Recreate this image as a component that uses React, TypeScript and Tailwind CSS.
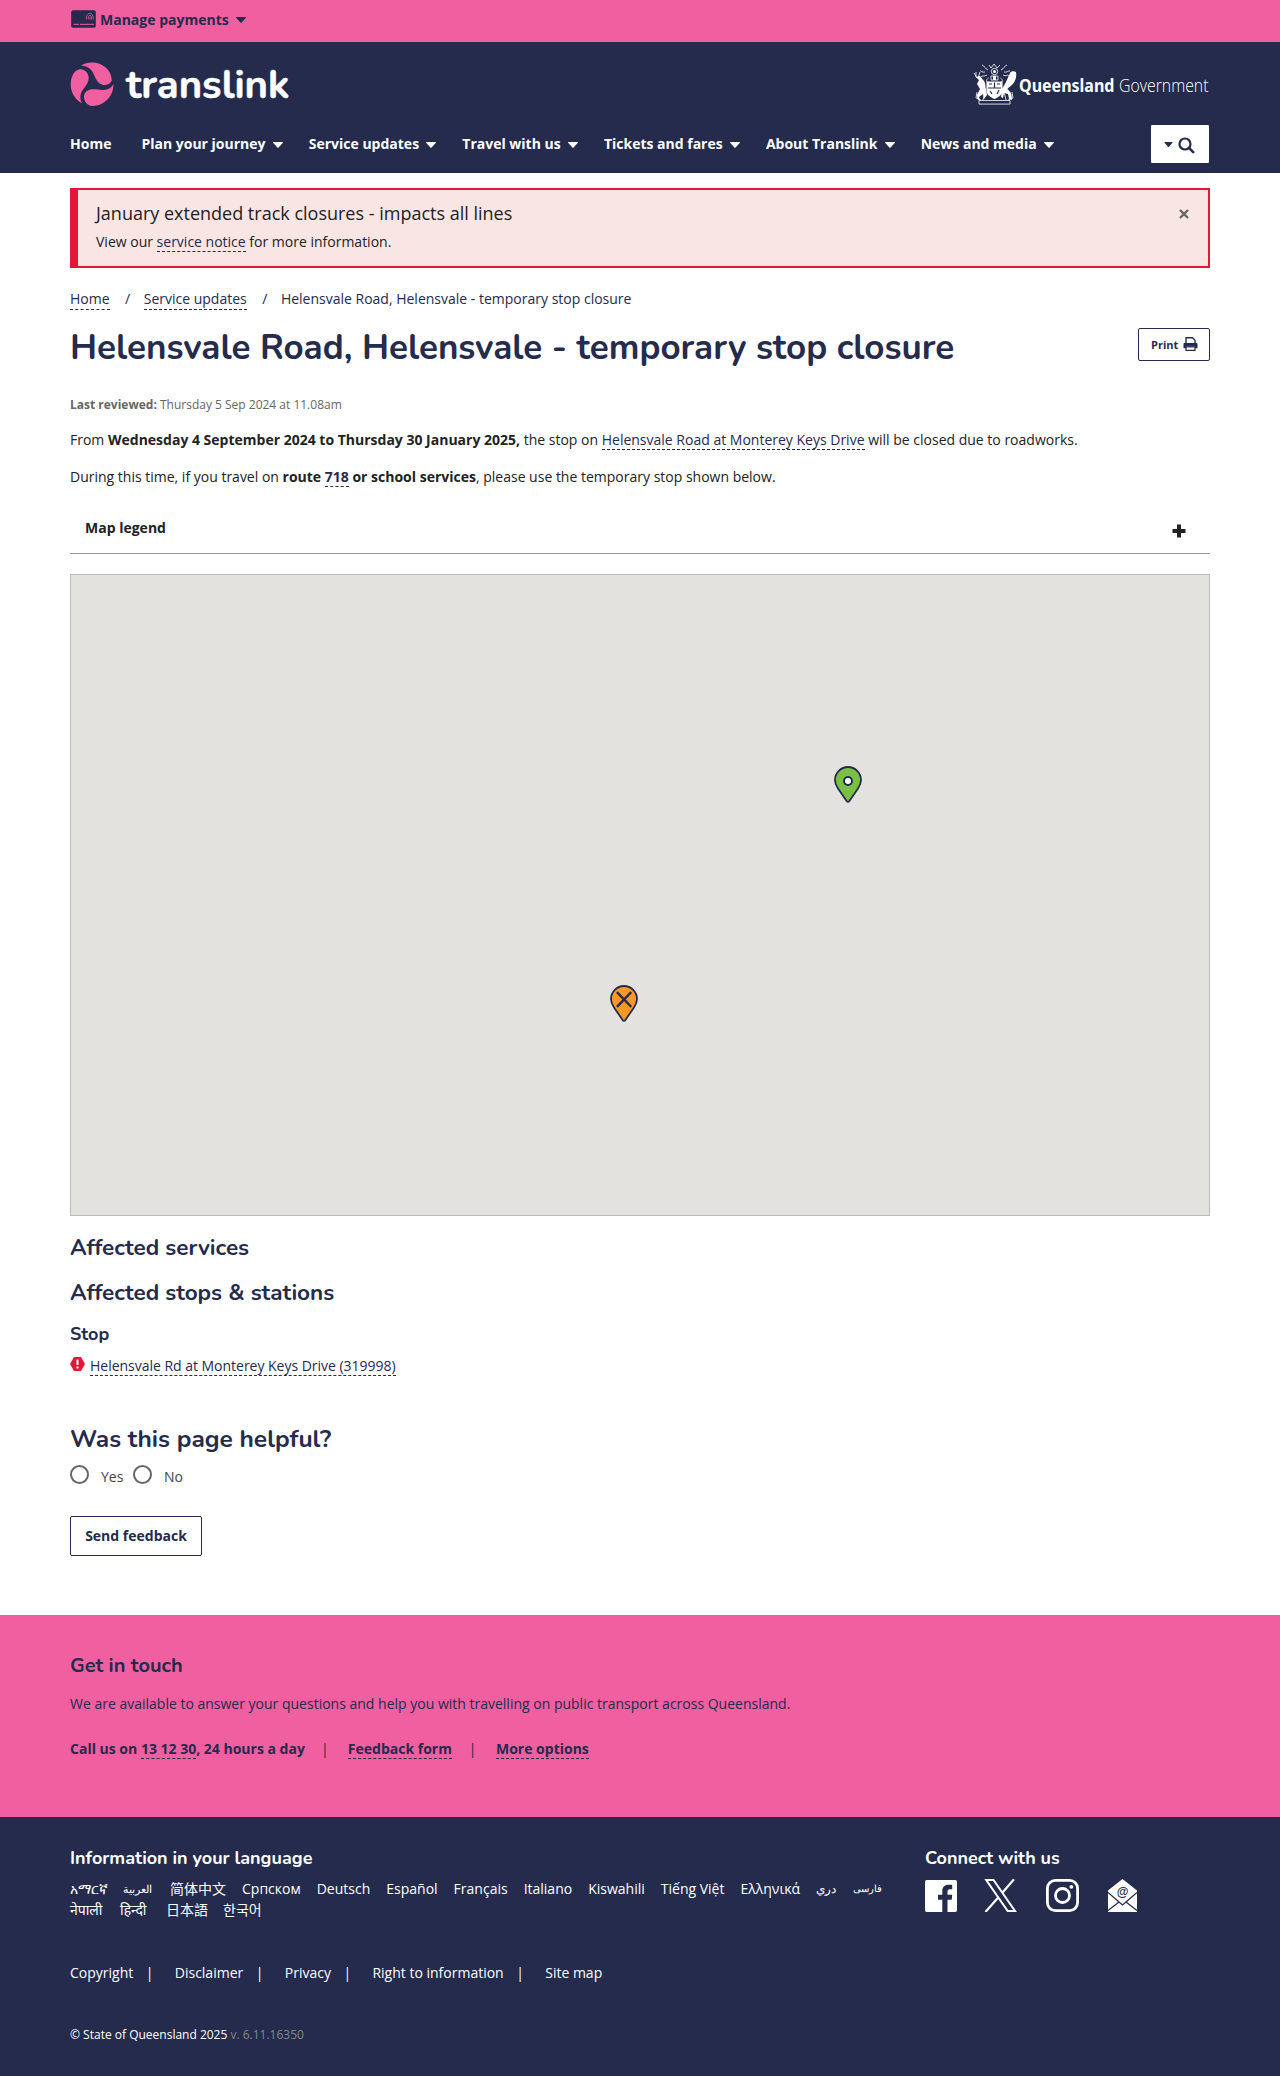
import React from 'react';

const Caret = ({ className = '' }: { className?: string }) => (
  <svg viewBox="0 0 10 6" className={`w-[10px] h-[6px] ${className}`} fill="currentColor" aria-hidden="true">
    <path d="M.4 0h9.2c.4 0 .5.4.3.7L5.6 5.6c-.3.4-.9.4-1.2 0L.1.7C-.1.4 0 0 .4 0z" />
  </svg>
);

const link = 'text-[#242b4d] border-b border-dashed border-[#242b4d]';
const heading = 'font-["Nunito","Lato",sans-serif] font-bold text-[#242b4d]';

const nav = ['Home', 'Plan your journey', 'Service updates', 'Travel with us', 'Tickets and fares', 'About Translink', 'News and media'];

const languages: [string, string][] = [
  ['አማርኛ', 'w-[37px]'],
  ['العربية', 'w-[31px] text-[11px]'],
  ['简体中文', ''],
  ['Српском', ''],
  ['Deutsch', ''],
  ['Español', ''],
  ['Français', ''],
  ['Italiano', ''],
  ['Kiswahili', ''],
  ['Tiếng Việt', ''],
  ['Ελληνικά', ''],
  ['دري', 'w-[21px] text-[12px]'],
  ['فارسی', 'w-[31px] text-[10px]'],
  ['नेपाली', 'w-[34px]'],
  ['हिन्दी', 'w-[30px]'],
  ['日本語', 'w-[41px]'],
  ['한국어', ''],
];

const legal = ['Copyright', 'Disclaimer', 'Privacy', 'Right to information', 'Site map'];

function TranslinkLogo() {
  return (
    <div className="flex" aria-label="translink">
      <svg width="44" height="46" viewBox="0 0 44 46" className="block">
        <g fill="#f05fa0">
          <path d="M11 4.6C15 1.800 20.500 1 25.500 1.800 35 3.400 41.500 10.500 41.800 19.500 40 23.500 35.500 25 31.800 23.600 25.500 21 25 14 21.500 9.500 19 6.200 15 4.800 11 4.600z" />
          <path d="M9.500 8.300C14 7.500 18.600 11.500 18.700 17 18.700 24 12 27.500 10.600 33.500 9.900 36.500 10.500 39.500 12 42.300 5 38.500.7 31.500.7 23.500.7 16.500 4 9.200 9.500 8.300z" />
          <path d="M43.400 23C43.800 35 34.500 44.800 22.400 45 17 44.500 13.500 40 14 35 14.600 30.500 18.500 28.300 23 28.300 28 28.300 31.500 29.800 36.500 28.500 39.800 27.700 42 25.800 43.400 23z" />
        </g>
      </svg>
      <span className='ml-[12px] font-["Nunito","Lato",sans-serif] font-bold text-[40px] leading-[50px] -mt-px [-webkit-text-stroke:0.5px_white]'>translink</span>
    </div>
  );
}

function QueenslandLogo() {
  return (
    <div className="flex w-[236px] mr-px" aria-label="Queensland Government">
      <svg width="45" height="46" viewBox="0 0 45 46" className="block shrink-0">
        <g transform="translate(0 1)">
          <g fill="none" stroke="#fff" strokeWidth=".8">
            <path d="M6 38.500h31v3.600H6z" />
            <path d="M16 3l2 3 3-4 3 4 3-3M15 8c-3-1-4-5-6-5M28 8c3-1 4-5 6-5M12 10c-3 1-4-2-5-1M31 10c3 1 5-2 6-1M14 13c-3 2-5 0-6 2M30 13c3 2 4-1 6 1" />
            <circle cx="21.500" cy="9.500" r="3.200" />
            <path d="M18 14h7v4h-7zM15.500 16c-3 2-2 4 0 5M27.500 16c3 2 2 4 0 5" />
            <path d="M1 11l3 5M3 10v5M7 10l-2 6M5 36c-1-6 4-7 4-11M38 36c1-6-4-7-4-11M4 30l-1 6 5 2M39 30l1 6-5 2M12 30l-2 8M31 30l2 8" />
          </g>
          <g fill="#fff">
            <path d="M3 15l4-1 4 5c2 3 1 5 2 8l1 6-3 4-1-5-4 3 1 3H5l-1-5 3-6-3-5 2-4z" />
            <path d="M33 20l4-9c1-2 4-2 6-1 1 5-1 10-4 13l-5 4 4 4 1 7-3-1-1-5-4-1-1 5-2-1 1-8z" />
            <path d="M13.500 19.500h16v9c0 5-5 7-8 8.500-3-1.500-8-3.500-8-8.500z" />
            <circle cx="21.500" cy="9.500" r="1.500" />
            <path d="M20 14h3v4h-3z" />
          </g>
          <path d="M15 26h13M21.500 20.500v5M16 22h3M24 22h3M17 29l2 3M26 28l-2 4" stroke="#242b4d" strokeWidth="1.200" fill="none" />
        </g>
      </svg>
      <span className='ml-px mt-[12px] w-[100px] shrink-0 origin-left scale-x-[0.865] font-["Noto_Sans"] font-bold text-[18.5px] leading-6'>Queensland</span>
      <span className='w-[90px] shrink-0 mt-[12px] origin-left scale-x-[0.855] font-["Open_Sans"] font-light text-[18.5px] leading-6'>Government</span>
    </div>
  );
}

function Pin({ kind }: { kind: 'open' | 'closed' }) {
  return (
    <svg width="28" height="37" viewBox="0 0 28 37" className="block">
      <path
        d="M14 1C6.800 1 1 6.800 1 14c0 3.500 1.300 6 3 8.500l8.800 12.700c.6.900 1.800.9 2.400 0L24 22.500c1.700-2.500 3-5 3-8.500C27 6.800 21.200 1 14 1z"
        fill={kind === 'open' ? '#7ac143' : '#f99727'}
        stroke="#242b4d"
        strokeWidth="1.800"
      />
      {kind === 'open' ? (
        <circle cx="14" cy="15" r="4" fill="#fff" stroke="#242b4d" strokeWidth="2" />
      ) : (
        <path d="M7.800 8l12.600 13M20.400 8L7.800 21" stroke="#242b4d" strokeWidth="2.400" strokeLinecap="square" />
      )}
    </svg>
  );
}

export default function App() {
  return (
    <div className='w-full min-h-[2076px] bg-white font-["Open_Sans","Noto_Sans","Noto_Sans_CJK_SC",sans-serif] text-[14px] leading-5 text-[#222]'>
      <div className="h-[42px] bg-[#f05fa0] px-[70px] flex items-center text-[#242b4d]">
        <svg width="25" height="18" viewBox="0 0 25 18" className="ml-[1px] -mt-[4px]">
          <rect x=".2" y=".2" width="24.600" height="17.600" rx="1.800" fill="#242b4d" />
          <path d="M2.500 14.300h5.500M9 14.300h14" stroke="#f05fa0" strokeWidth="1" />
          <path d="M15.500 9.500C14.500 5 18 2.500 20 3.500S22.500 8 22 9.500M17.500 9.500C16.500 7 18 5 19.200 5.300S20.700 8 20.300 9.500M19 7v2.500" stroke="#f05fa0" strokeWidth=".8" fill="none" />
        </svg>
        <span className="ml-1 font-bold leading-5 -mt-[3px]">Manage payments</span>
        <Caret className="ml-[7px] -mt-[3px]" />
      </div>

      <header className="h-[131px] bg-[#242b4d] px-[70px] pt-[19px] text-white">
        <div className="flex justify-between h-[64px]">
          <TranslinkLogo />
          <QueenslandLogo />
        </div>
        <div className="flex items-center justify-between h-[38px]">
          <nav className="flex items-center font-bold">
            {nav.map((item, i) => (
              <a key={item} className={`flex items-center whitespace-nowrap ${i === 0 ? 'mr-[30px]' : 'mr-[26.2px]'}`}>
                {item}
                {i > 0 && <Caret className="ml-[7px] mt-px" />}
              </a>
            ))}
          </nav>
          <button className="w-[58px] h-[38px] mr-px bg-white text-[#242b4d] rounded-[1px] flex items-center pl-[13px]">
            <Caret className="w-[9px]! h-[5px]!" />
            <svg width="17" height="17" viewBox="0 0 17 17" className="ml-[5px] mt-[3px]" fill="none" stroke="currentColor">
              <circle cx="7" cy="7" r="5.500" strokeWidth="2.200" />
              <path d="M11.200 11.200l4 4" strokeWidth="2.600" strokeLinecap="round" />
            </svg>
          </button>
        </div>
      </header>

      <main className="px-[70px] pt-[15px] h-[1442px]">
        <section className="h-[80px] border-2 border-l-8 border-[#e31837] bg-[#f9e5e4] px-[18px] flex justify-between">
          <div>
            <h2 className="text-[18px] leading-6 mt-[11px]">January extended track closures - impacts all lines</h2>
            <p className="mt-[7px]">
              View our <a className={link}>service notice</a> for more information.
            </p>
          </div>
          <svg width="10" height="10" viewBox="0 0 10 10" className="mt-[19px] mr-px" stroke="#666" strokeWidth="2.400">
            <path d="M1 1l8 8M9 1l-8 8" />
          </svg>
        </section>

        <div className="mt-[21px] flex text-[#242b4d]">
          <a className={`${link} h-[21px]`}>Home</a>
          <span className="ml-[15.5px] mr-[13.500px]">/</span>
          <a className={`${link} h-[21px]`}>Service updates</a>
          <span className="ml-[15.5px] mr-[13.500px]">/</span>
          <span>Helensvale Road, Helensvale - temporary stop closure</span>
        </div>

        <div className="flex justify-between mt-[15px] h-[44px]">
          <h1 className={`${heading} text-[35px] leading-[44px] mt-px`}>Helensvale Road, Helensvale - temporary stop closure</h1>
          <button className="w-[72px] h-[33px] mt-[3px] border border-[#242b4d] rounded-[2px] flex items-center pl-[12px] text-[11px] font-bold text-[#242b4d]">
            Print
            <svg width="15" height="14" viewBox="0 0 15 14" className="ml-[5px] -mt-px" fill="none" stroke="currentColor">
              <path d="M3 6V.8h6.500L12 3.200V6" strokeWidth="1.400" />
              <path d="M1.800 6h11.400c.8 0 1.300.5 1.300 1.300v4H12V9.500H3v1.800H.5v-4C.5 6.500 1 6 1.800 6z" fill="currentColor" stroke="none" />
              <path d="M3 9.800v3.500h9V9.800z" fill="#fff" strokeWidth="1.200" />
            </svg>
          </button>
        </div>

        <p className="text-[12px] leading-5 mt-[26px] text-[#666]"><b>Last reviewed:</b> Thursday 5 Sep 2024 at 11.08am</p>
        <p className="mt-[15px]">
          From <b>Wednesday 4 September 2024 to Thursday 30 January 2025,</b> the stop on <a className={link}>Helensvale Road at Monterey Keys Drive</a> will be closed due to roadworks.
        </p>
        <p className="mt-[17px]">
          During this time, if you travel on <b>route <a className={link}>718</a> or school services</b>, please use the temporary stop shown below.
        </p>

        <div className="mt-[31px] h-[36px] border-b border-[#999] pl-[15px] pr-[24px] flex justify-between">
          <b>Map legend</b>
          <svg width="14" height="14" viewBox="0 0 14 14" className="mt-[6px]" stroke="#222" strokeWidth="4">
            <path d="M7 .5v13M0.500 7h13" />
          </svg>
        </div>

        <div className="relative mt-[20px] h-[642px] border border-[#bbb] bg-[#e4e2de]">
          <div className="absolute left-[763px] top-[191px]"><Pin kind="open" /></div>
          <div className="absolute left-[539px] top-[410px]"><Pin kind="closed" /></div>
        </div>

        <h2 className={`${heading} text-[22.5px] leading-7 mt-[18px]`}>Affected services</h2>
        <h2 className={`${heading} text-[22.5px] leading-7 mt-[17px]`}>Affected stops &amp; stations</h2>
        <h3 className={`${heading} text-[18px] leading-6 mt-[15px]`}>Stop</h3>
        <div className="mt-[10px] flex items-start">
          <svg width="15" height="14" viewBox="0 0 15 14" className="mt-px">
            <path d="M4 0h7l4 7-4 7H4L0 7z" fill="#e31837" />
            <path d="M7.500 2.500v5.500M7.500 9.500v2" stroke="#fff" strokeWidth="2" />
          </svg>
          <a className={`${link} ml-[5px] h-5 tracking-[-0.02px]`}>Helensvale Rd at Monterey Keys Drive (319998)</a>
        </div>

        <h2 className={`${heading} text-[24.5px] leading-8 mt-[47px]`}>Was this page helpful?</h2>
        <div className="flex items-center mt-[10px] h-[20px] text-[#444]">
          <span className="size-[19px] rounded-full border-2 border-[#666] -mt-px" />
          <span className="ml-[12px] mt-[3px] w-[32px]">Yes</span>
          <span className="size-[19px] rounded-full border-2 border-[#666] -mt-px" />
          <span className="ml-[12px] mt-[3px]">No</span>
        </div>
        <button className="block mt-[31px] w-[132px] h-[40px] border border-[#242b4d] rounded-[2px] font-bold text-[#242b4d]">Send feedback</button>
      </main>

      <section className="h-[202px] bg-[#f05fa0] px-[70px] pt-[37px] text-[#242b4d]">
        <h2 className={`${heading} text-[20px] leading-7`}>Get in touch</h2>
        <p className="mt-[14px]">We are available to answer your questions and help you with travelling on public transport across Queensland.</p>
        <div className="mt-[25px] flex font-bold">
          <span>Call us on <a className={link}>13 12 30</a>, 24 hours a day</span>
          <span className="w-[43px] pr-[3px] text-center font-normal">|</span>
          <a className={`${link} h-5`}>Feedback form</a>
          <span className="w-[44px] pr-[3px] text-center font-normal">|</span>
          <a className={`${link} h-5`}>More options</a>
        </div>
      </section>

      <footer className="h-[259px] bg-[#242b4d] px-[70px] pt-[29px] text-white">
        <div className="flex h-[117px]">
          <div className="w-[855px]">
            <h3 className='font-["Nunito","Lato",sans-serif] font-bold text-[18px] leading-6'>Information in your language</h3>
            <div className="mt-[8px] w-[830px] flex flex-wrap gap-x-[16px]">
              {languages.map(([l, size]) => (
                <a key={l} className={`h-[21px] leading-[21px] whitespace-nowrap ${size}`}>{l}</a>
              ))}
            </div>
          </div>
          <div>
            <h3 className='font-["Nunito","Lato",sans-serif] font-bold text-[18px] leading-6'>Connect with us</h3>
            <div className="mt-[9px] flex items-center">
              <svg width="32" height="32" viewBox="0 0 32 33" preserveAspectRatio="none">
                <path fill="#fff" d="M1.800 0h28.400C31.200 0 32 .8 32 1.800v29.400c0 1-.8 1.800-1.800 1.800H27V20.300h0V33H22.500V20.300h4.200l.5-5h-4.700v-3.200c0-1.500.5-2.500 2.500-2.500h2.200V5.200C26.200 5.100 25.200 5 23.500 5 19.500 5 17.300 7.300 17.300 11.600v3.700H13v5h4.300V33H1.800C.8 33 0 32.200 0 31.200V1.800C0 .8.800 0 1.800 0z" />
              </svg>
              <svg width="33" height="33" viewBox="0 0 33 33" className="ml-[27px]" fill="none" stroke="#fff">
                <path d="M2.200 1h7.300L31 32h-7.300z" strokeWidth="2" />
                <path d="M30 .3L18.300 13.800M14.200 18.500L1.500 33" strokeWidth="2.200" />
              </svg>
              <svg width="33" height="33" viewBox="0 0 33 33" className="ml-[29px]" fill="none" stroke="#fff">
                <rect x="1.400" y="1.400" width="30.200" height="30.200" rx="8" strokeWidth="2.800" />
                <circle cx="16.500" cy="16.500" r="7" strokeWidth="2.800" />
                <circle cx="25.300" cy="7.800" r="1.900" fill="#fff" stroke="none" />
              </svg>
              <svg width="29" height="33" viewBox="0 0 29 33" className="ml-[29px]">
                <path d="M14.500 0L29 11.500V33H0V11.500z" fill="#fff" />
                <path d="M0 13.500l11 9.500L0 31.500M29 13.500L18 23l11 8.500M11 23l3.500 3 3.500-3" stroke="#242b4d" strokeWidth="1.300" fill="none" />
                <text x="14.500" y="17" textAnchor="middle" fill="#242b4d" className='font-["Liberation_Sans"] font-bold text-[12px]'>@</text>
              </svg>
            </div>
          </div>
        </div>
        <div className="flex">
          {legal.map((l, i) => (
            <span key={l} className="flex">
              <a>{l}</a>
              {i < legal.length - 1 && <span className="ml-[12.5px] mr-[21.300px]">|</span>}
            </span>
          ))}
        </div>
        <p className="mt-[42px] text-[12px]">© State of Queensland 2025 <span className="text-[#888]">v. 6.11.16350</span></p>
      </footer>
    </div>
  );
}
